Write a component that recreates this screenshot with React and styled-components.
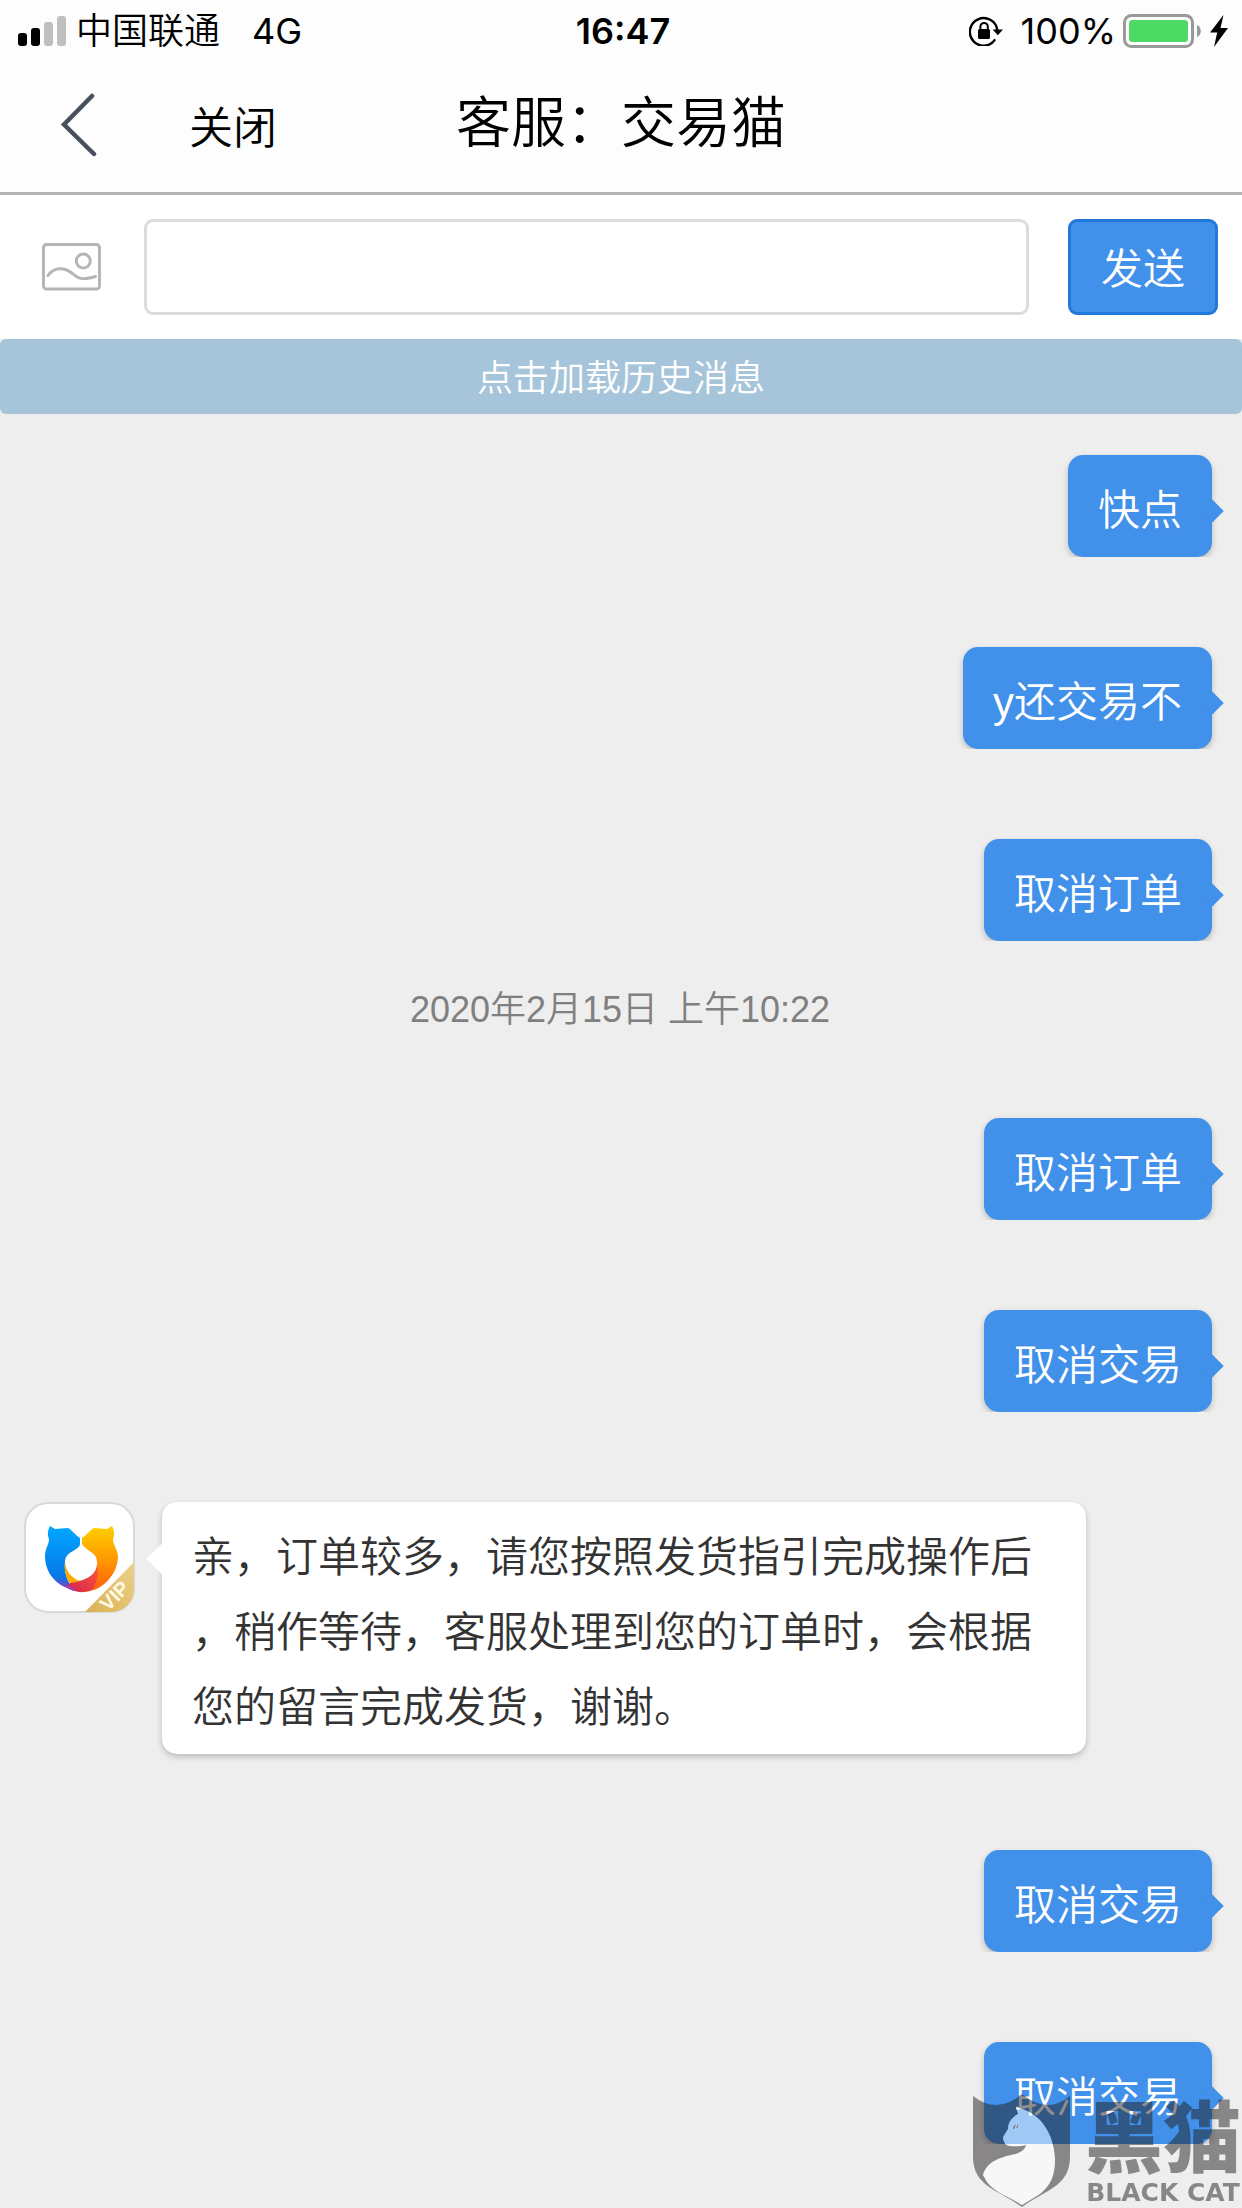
import React from "react";
import styled, { createGlobalStyle } from "styled-components";

const cjk = '"Noto Sans CJK SC", sans-serif';

const GlobalStyle = createGlobalStyle`
  *, *::before, *::after { box-sizing: border-box; }
  body {
    margin: 0;
    background: #eee;
    font-family: "Liberation Sans", ${cjk};
    font-weight: 350;
  }
  button { border: 0; margin: 0; padding: 0; background: none; color: inherit; font: inherit; cursor: pointer; }
  svg { display: block; flex: none; }
`;

const Page = styled.div`
  min-height: 100vh;
  display: flex;
  flex-direction: column;
`;

const TopArea = styled.header`
  background: #fdfdfd;
  border-bottom: 3px solid #b4b4b4;
`;

const StatusBar = styled.div`
  display: grid;
  grid-template-columns: 1fr auto 1fr;
  align-items: center;
  height: 62px;
  padding: 0 14px 0 18px;
  font: 400 36px/44px Inter, ${cjk};
  color: #000;
`;

const StatusGroup = styled.div`
  display: flex;
  align-items: center;
  justify-content: ${(p) => (p.$end ? "flex-end" : "flex-start")};
  gap: ${(p) => (p.$end ? "9px" : "10px")};
`;

const Carrier = styled.span`
  margin-right: 22px;
  font-weight: 350;
`;

const Level = styled.span`
  margin: 0 -2px 0 9px;
`;

const Clock = styled.time`
  font-weight: 600;
`;

const NavBar = styled.nav`
  display: grid;
  grid-template-columns: 1fr auto 1fr;
  align-items: center;
  height: 130px;
  padding: 0 60px;
  font-family: ${cjk};
`;

const NavStart = styled.div`
  display: flex;
  align-items: center;
  gap: 92px;
  padding-bottom: 4px;
`;

const CloseButton = styled.button`
  font-size: 44px;
  line-height: 64px;
  color: #000;
`;

const Title = styled.h1`
  margin: 0;
  padding-bottom: 18px;
  font-size: 55px;
  font-weight: 350;
  line-height: 80px;
  color: #000;
`;

const Composer = styled.form`
  display: flex;
  align-items: center;
  padding: 24px 24px 24px 42px;
  background: #fff;
`;

const MessageInput = styled.input`
  flex: 1;
  min-width: 0;
  height: 96px;
  margin: 0 39px 0 43px;
  padding: 0 24px;
  border: 3px solid #dcdcdc;
  border-radius: 9px;
  background: #fff;
  font: 350 42px/60px "Liberation Sans", ${cjk};
  outline: none;
`;

const SendButton = styled.button`
  && {
    width: 150px;
    height: 96px;
    padding-bottom: 3px;
    border: 3px solid #2378dc;
    border-radius: 9px;
    background: #4190ea;
    color: #fff;
    font: 350 42px/60px ${cjk};
  }
`;

const HistoryButton = styled.button`
  && {
    height: 75px;
    padding-bottom: 3px;
    border-radius: 6px;
    background: #a7c5da;
    color: #fff;
    font: 350 36px/52px ${cjk};
  }
`;

const Messages = styled.main`
  display: flex;
  flex-direction: column;
  gap: 90px;
  padding: 41px 30px 64px 24px;
`;

const Group = styled.section`
  display: flex;
  flex-direction: column;
  gap: 90px;
`;

const Stamp = styled.time`
  margin: -45px 0 -6px;
  padding-left: 4px;
  color: #808080;
  font-size: 36px;
  line-height: 48px;
  text-align: center;
`;

const Bubble = styled.p`
  position: relative;
  margin: 0;
  padding: 18px 30px 9px;
  border-radius: 15px;
  font-size: 42px;
  line-height: 75px;
  line-break: anywhere;
  box-shadow: 0 3px 6px rgba(0, 0, 0, 0.22);

  &::after {
    content: "";
    position: absolute;
    transform: rotate(45deg);
  }
`;

const SentBubble = styled(Bubble)`
  align-self: flex-end;
  background: #4190ea;
  color: #fff;
  clip-path: inset(-12px -20px 0 -12px);

  &::after {
    top: 47px;
    right: -8px;
    width: 18px;
    height: 18px;
    background: #4190ea;
  }
`;

const ReceivedRow = styled.div`
  display: flex;
  align-items: flex-start;
  gap: 27px;
  margin: 0 126px 6px 0;
`;

const ReceivedBubble = styled(Bubble)`
  flex: 1;
  background: #fff;
  color: #333;

  &::after {
    top: 46px;
    left: -11px;
    width: 22px;
    height: 22px;
    background: #fff;
  }
`;

const Watermark = styled.aside`
  position: fixed;
  right: 1px;
  bottom: 0;
  display: flex;
  align-items: flex-end;
  gap: 14px;
  pointer-events: none;
`;

const WatermarkText = styled.div`
  display: flex;
  flex-direction: column;
  align-items: center;
  gap: 4px;
  color: rgba(34, 30, 30, 0.5);
`;

const WatermarkName = styled.span`
  font: 900 78px/82px ${cjk};
`;

const WatermarkLatin = styled.span`
  font: 700 25px/30px "DejaVu Sans", sans-serif;
  white-space: nowrap;
`;

const Signal = () => (
  <svg width="48" height="30" viewBox="0 0 48 30" aria-hidden="true">
    <rect x="0" y="17" width="9" height="13" rx="3" />
    <rect x="13" y="12" width="9" height="18" rx="3" />
    <rect x="26" y="6" width="9" height="24" rx="3" fill="#bfbfbf" />
    <rect x="39" y="0" width="9" height="30" rx="3" fill="#bfbfbf" />
  </svg>
);

const RotationLock = () => (
  <svg width="34" height="30" viewBox="0 0 34 30" aria-hidden="true">
    <path d="M26.2 23.4A13.8 13.8 0 1 1 28.3 14" fill="none" stroke="#000" strokeWidth="2.4" />
    <path d="M23.6 13.6H34L28.8 19.2Z" />
    <rect x="9" y="13" width="12" height="10" rx="1.5" />
    <path d="M11.4 14V10.6a3.7 3.7 0 0 1 7.4 0V14" fill="none" stroke="#000" strokeWidth="2" />
  </svg>
);

const Battery = () => (
  <svg width="78" height="34" viewBox="0 0 78 34" aria-hidden="true">
    <rect x="1.5" y="1.5" width="68" height="31" rx="7" fill="none" stroke="#999" strokeWidth="3" />
    <rect x="6" y="6" width="59" height="22" rx="3.5" fill="#4cd964" />
    <path d="M74 11c5 1.500 5 10.500 0 12z" fill="#999" />
  </svg>
);

const Bolt = () => (
  <svg width="18" height="32" viewBox="0 0 18 32" aria-hidden="true">
    <path d="M13.500 0L0 17.500h7.200L4 32 18 13h-7.500z" />
  </svg>
);

const Chevron = () => (
  <svg width="37" height="64" viewBox="0 0 37 64" aria-hidden="true">
    <path d="M32 3L4 31.500 34 61" fill="none" stroke="#48505c" strokeWidth="4.500" strokeLinecap="round" />
  </svg>
);

const PictureIcon = () => (
  <svg width="59" height="48" viewBox="0 0 59 48" fill="none" stroke="#b5b5b5" strokeWidth="2.900" aria-hidden="true">
    <rect x="1.500" y="1.500" width="56" height="44.500" rx="3" />
    <circle cx="41.300" cy="18" r="7" />
    <path d="M6 32.500C12 24 22 24 29 29.500S38 38 53.500 33.500" strokeLinecap="round" />
  </svg>
);

const Avatar = () => (
  <svg width="111" height="111" viewBox="0 0 111 111" role="img" aria-label="交易猫">
    <defs>
      <linearGradient id="blue" x1="0" y1="0" x2="0" y2="1">
        <stop offset="0" stopColor="#00a8ff" />
        <stop offset="0.8" stopColor="#0878e8" />
        <stop offset="1" stopColor="#7a3fc8" />
      </linearGradient>
      <linearGradient id="orange" x1="0" y1="0" x2="0" y2="1">
        <stop offset="0" stopColor="#ffd000" />
        <stop offset="0.5" stopColor="#ff9a00" />
        <stop offset="1" stopColor="#ff5a10" />
      </linearGradient>
      <linearGradient id="red" x1="0" y1="1" x2="1" y2="0">
        <stop offset="0" stopColor="#cf2158" />
        <stop offset="1" stopColor="#ff5a30" />
      </linearGradient>
      <linearGradient id="gold" x1="0" y1="1" x2="1" y2="0">
        <stop offset="0" stopColor="#d9b052" />
        <stop offset="1" stopColor="#ecd38c" />
      </linearGradient>
      <clipPath id="tile"><rect x="1" y="1" width="109" height="109" rx="23" /></clipPath>
    </defs>
    <rect x="1" y="1" width="109" height="109" rx="23" fill="#fff" stroke="#d9d9d9" strokeWidth="2" />
    <path d="M26 24L31 27L44 26C48 28 50 32 56 36V43C53 49 41 50 41 60C40 68 42 76 47 84L46 87C30 82 21 69 21 54C21 46 25 43 25 37C23 32 24 28 26 24Z" fill="url(#blue)" />
    <path d="M88 24L83 27L70 26C66 28 64 32 58 36V42C63 50 73 50 73 60C75 72 66 78 57 82L54 90C78 92 94 72 94 54C93 46 89 43 89 37C91 32 90 28 88 24Z" fill="url(#orange)" />
    <path d="M41 60C42 70 48 76 56 79L48 84C42 77 40 69 41 60Z" fill="#ffab00" />
    <path d="M73 61C73 70 67 78 46 81L42 85Q56 94 69 87C73 80 75 71 73 61Z" fill="url(#red)" />
    <path d="M40 83Q48 84 52 89Q46 89 40 83Z" fill="#9c3fb8" />
    <g clipPath="url(#tile)">
      <path d="M111 59L60 111H111Z" fill="url(#gold)" />
      <text x="84" y="110" transform="rotate(-45 84 110)" fill="#fff8e4" fontFamily="Liberation Sans, sans-serif" fontWeight="700" fontSize="20">VIP</text>
    </g>
  </svg>
);

const catOutline =
  "M43 14L45 21C38 25 35 30 35 36L30 44C30 49 33 53 37 53Q46 54 53 52Q52 58 43 61C28 64 14 68 10 82L14 89C22 100 37 104 49 112L67 101C78 92 82 82 82 66C81 43 70 24 52 17Z";

const CatShield = () => (
  <svg width="98" height="115" viewBox="0 0 98 115" aria-hidden="true">
    <path
      fillRule="evenodd"
      fill="#221e1e"
      fillOpacity="0.5"
      d={`M0 3Q24 22 49 1Q74 22 97 3V64C97 94 70 98 49 114C28 98 0 94 0 64Z ${catOutline}`}
    />
    <path d={catOutline} fill="#fff" fillOpacity="0.5" />
    <path d="M40 36Q40 32 45 31Q46 36 40 36Z" fill="#221e1e" fillOpacity="0.5" />
    <path d="M44 31L42 36" stroke="#fff" strokeOpacity="0.6" strokeWidth="1.500" />
  </svg>
);

const earlier = ["快点", "y还交易不", "取消订单"];
const later = ["取消订单", "取消交易"];
const afterReply = ["取消交易", "取消交易"];

const Sent = ({ items }) => items.map((text, i) => <SentBubble key={i}>{text}</SentBubble>);

export default function App() {
  return (
    <Page>
      <GlobalStyle />
      <TopArea>
        <StatusBar>
          <StatusGroup>
            <Signal />
            <Carrier>中国联通</Carrier>
            <span>4G</span>
          </StatusGroup>
          <Clock>16:47</Clock>
          <StatusGroup $end>
            <RotationLock />
            <Level>100%</Level>
            <Battery />
            <Bolt />
          </StatusGroup>
        </StatusBar>
        <NavBar>
          <NavStart>
            <button type="button" aria-label="返回"><Chevron /></button>
            <CloseButton type="button">关闭</CloseButton>
          </NavStart>
          <Title>客服：交易猫</Title>
        </NavBar>
      </TopArea>
      <Composer onSubmit={(e) => e.preventDefault()}>
        <button type="button" aria-label="发送图片"><PictureIcon /></button>
        <MessageInput type="text" aria-label="消息" />
        <SendButton type="submit">发送</SendButton>
      </Composer>
      <HistoryButton type="button">点击加载历史消息</HistoryButton>
      <Messages>
        <Group><Sent items={earlier} /></Group>
        <Stamp dateTime="2020-02-15T10:22">2020年2月15日 上午10:22</Stamp>
        <Group>
          <Sent items={later} />
          <ReceivedRow>
            <Avatar />
            <ReceivedBubble>
              亲，订单较多，请您按照发货指引完成操作后，稍作等待，客服处理到您的订单时，会根据您的留言完成发货，谢谢。
            </ReceivedBubble>
          </ReceivedRow>
          <Sent items={afterReply} />
        </Group>
      </Messages>
      <Watermark aria-hidden="true">
        <CatShield />
        <WatermarkText>
          <WatermarkName>黑猫</WatermarkName>
          <WatermarkLatin>BLACK CAT</WatermarkLatin>
        </WatermarkText>
      </Watermark>
    </Page>
  );
}
